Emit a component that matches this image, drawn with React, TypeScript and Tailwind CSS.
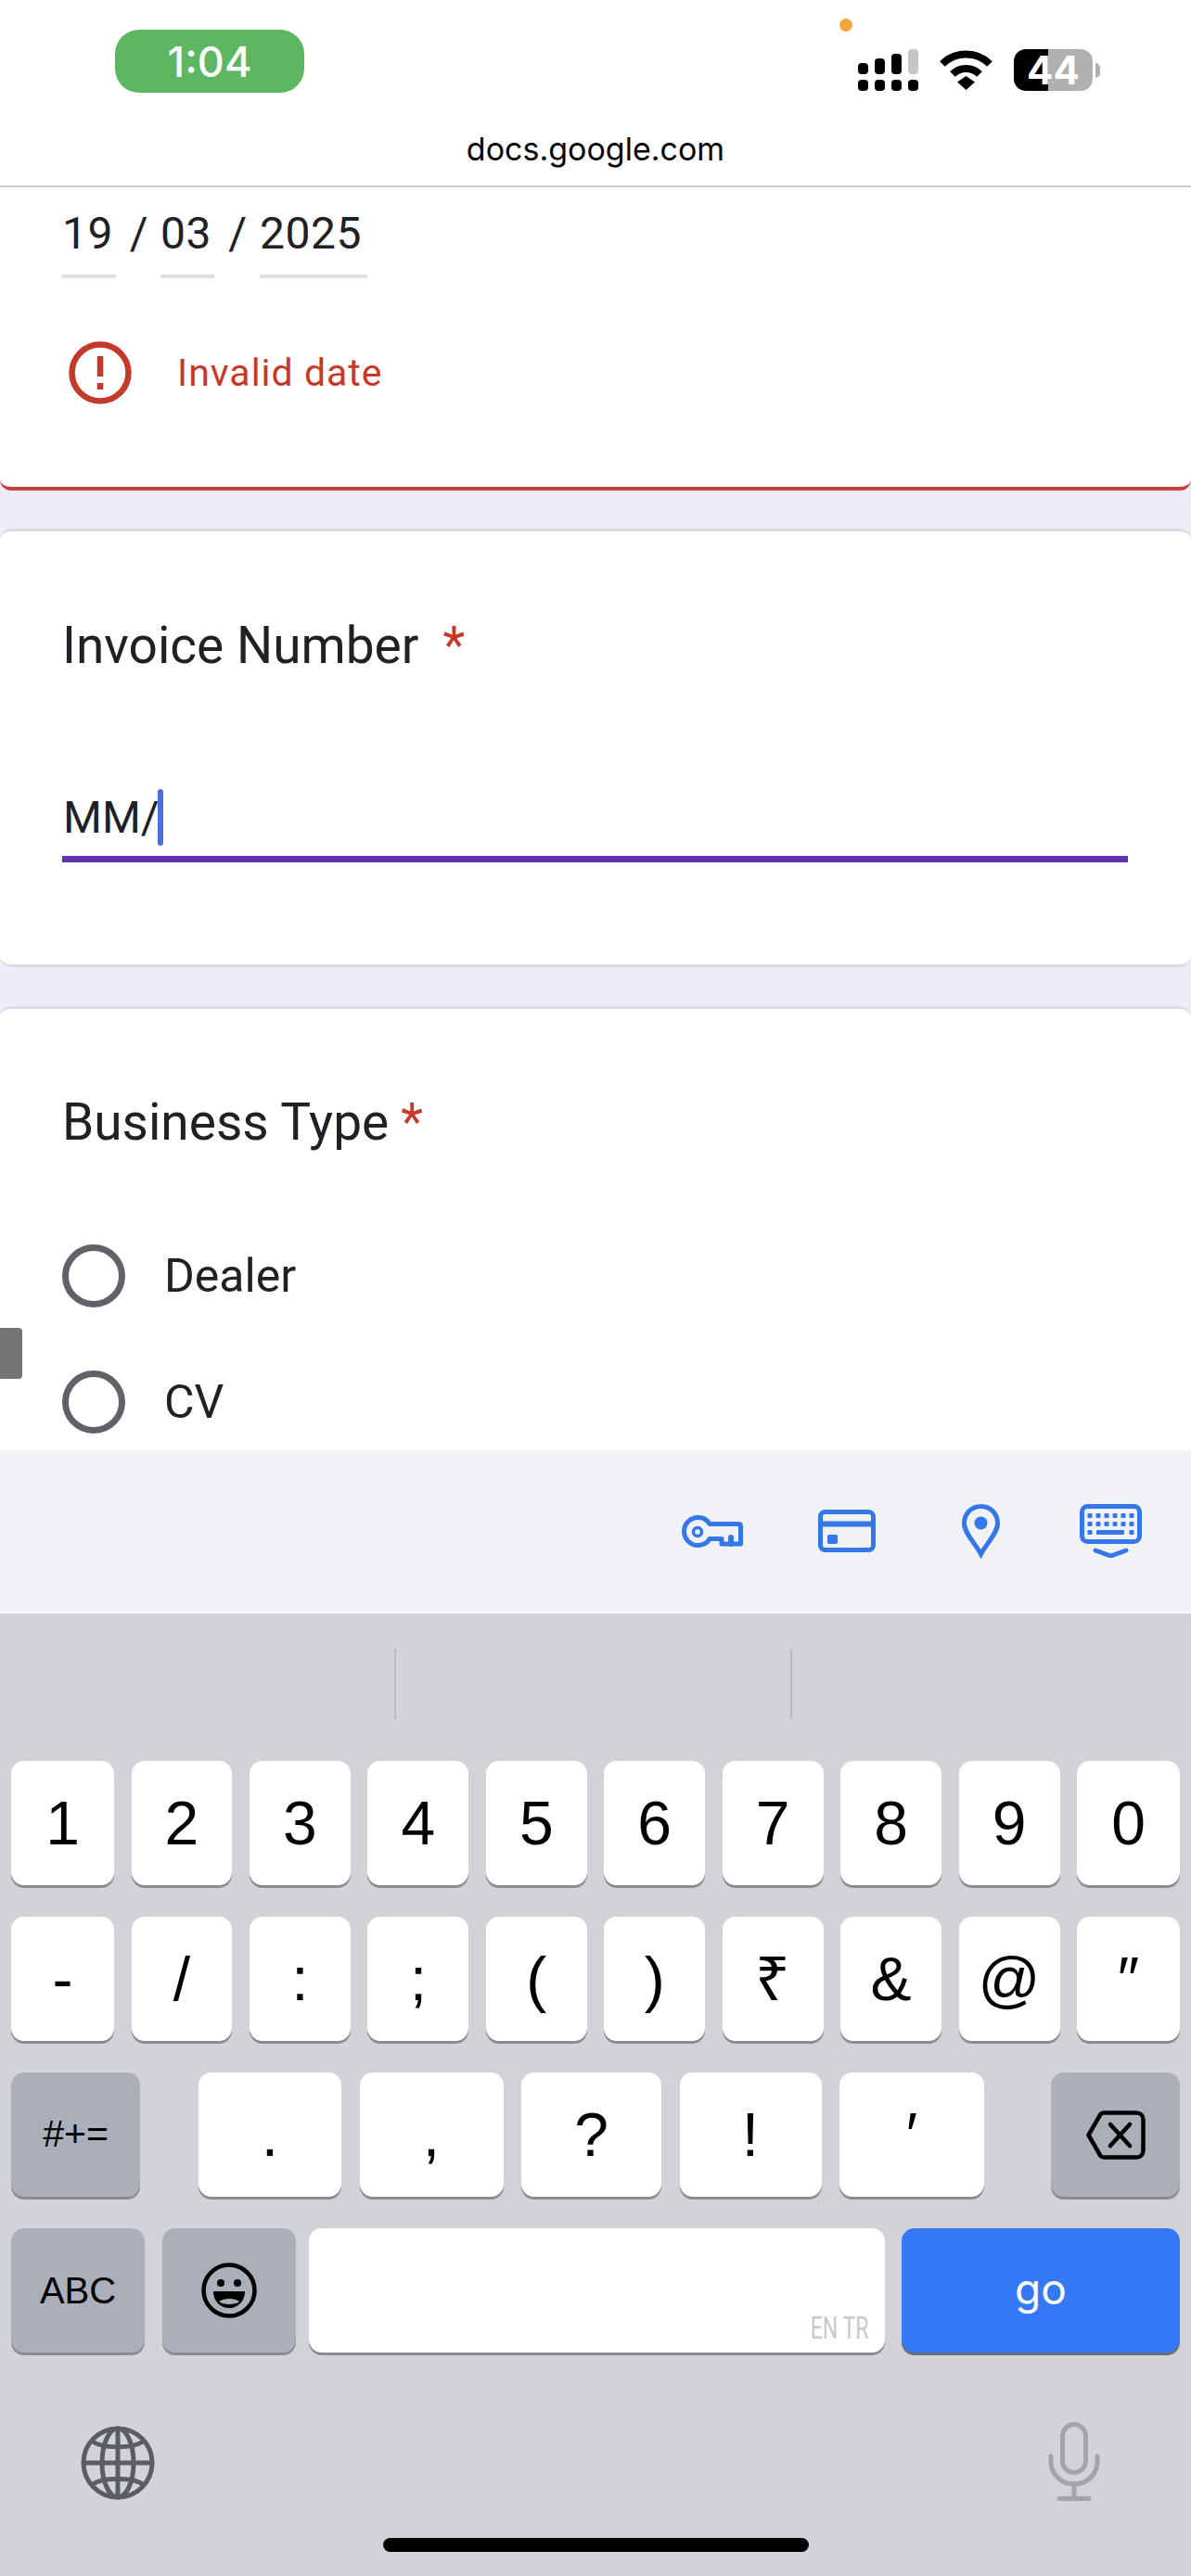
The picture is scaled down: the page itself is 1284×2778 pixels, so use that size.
const row1 = ['1', '2', '3', '4', '5', '6', '7', '8', '9', '0']
const row2 = ['-', '/', ':', ';', '(', ')', '₹', '&', '@', '″']
const row3 = [
  { label: '.', width: 'w-[154px]' },
  { label: ',', width: 'w-[155px]' },
  { label: '?', width: 'w-[151px]' },
  { label: '!', width: 'w-[153px]' },
  { label: '′', width: 'w-[156px]' },
]

function Key({ children, className = '' }: { children?: React.ReactNode; className?: string }) {
  return (
    <div className={`flex h-[134px] items-center justify-center rounded-[14px] bg-white text-[66px] text-black shadow-[0_3px_0_#8b8c91] ${className}`}>
      {children}
    </div>
  )
}

function GrayKey({ children, className = '' }: { children?: React.ReactNode; className?: string }) {
  return (
    <div className={`flex h-[134px] items-center justify-center rounded-[14px] bg-[#abafba] text-black shadow-[0_3px_0_#8b8c91] ${className}`}>
      {children}
    </div>
  )
}

function KeyRow({ keys }: { keys: string[] }) {
  return (
    <div className="flex gap-[18.5px]">
      {keys.map((k, i) => (
        <Key key={k} className={i === 0 || i === 9 ? 'w-[111px]' : 'flex-1'}>
          {k}
        </Key>
      ))}
    </div>
  )
}

function Signal() {
  return (
    <svg width="65" height="45" viewBox="0 0 65 45" fill="#000">
      <rect x="0" y="15" width="11" height="12" rx="4" />
      <rect x="18" y="10" width="11" height="17" rx="4" />
      <rect x="36" y="5" width="11" height="22" rx="4" />
      <rect x="54" y="0" width="11" height="27" rx="4" fill="#c6c6c6" />
      <rect x="0" y="33" width="11" height="12" rx="4" />
      <rect x="18" y="33" width="11" height="12" rx="4" />
      <rect x="36" y="33" width="11" height="12" rx="4" />
      <rect x="54" y="33" width="11" height="12" rx="4" />
    </svg>
  )
}

function Wifi() {
  return (
    <svg width="57" height="43" viewBox="0 0 57 43" fill="none" stroke="#000" strokeWidth="8">
      <path d="M3 15C17 1 40 1 54 15" />
      <path d="M14 26C22 18 35 18 43 26" />
      <path d="M19 34.500L28.500 28L38 34.500L28.500 43Z" fill="#000" stroke="none" />
    </svg>
  )
}

function KeyIcon() {
  return (
    <svg width="66" height="35" viewBox="0 0 66 35" fill="none" stroke="#3377ea" strokeWidth="5" strokeLinejoin="round">
      <path d="M30 9.500C27.500 5 23 2.500 17.500 2.500C9.500 2.500 2.500 9 2.500 17.500C2.500 26 9.500 32.500 17.500 32.500C23 32.500 27.500 30 30 25.500H43V31H63.500V12C63.500 10.500 62.500 9.500 61 9.500Z" />
      <circle cx="17" cy="18" r="4.500" strokeWidth="3.500" />
      <path d="M53 31V24" strokeWidth="6" strokeLinecap="round" />
    </svg>
  )
}

function CardIcon() {
  return (
    <svg width="62" height="46" viewBox="0 0 62 46" fill="none" stroke="#3377ea" strokeWidth="5">
      <rect x="2.500" y="2.500" width="57" height="41" rx="5" />
      <path d="M2 15.500H60" strokeWidth="6" />
      <rect x="10" y="27" width="11" height="10" rx="2" fill="#3377ea" stroke="none" />
    </svg>
  )
}

function PinIcon() {
  return (
    <svg width="41" height="59" viewBox="0 0 41 59" fill="none" stroke="#3377ea" strokeWidth="5">
      <path d="M20.500 2.500C10 2.500 2.500 10.500 2.500 21C2.500 31 14 42 20.500 54C27 42 38.500 31 38.500 21C38.500 10.500 31 2.500 20.500 2.500Z" />
      <circle cx="20.500" cy="20.500" r="7" fill="#3377ea" stroke="none" />
    </svg>
  )
}

function KeyboardIcon() {
  const cols = [11, 20, 29, 38, 47, 56]
  return (
    <svg width="67" height="58" viewBox="0 0 67 58" fill="#3377ea">
      <rect x="2.500" y="2.500" width="62" height="38" rx="6" fill="none" stroke="#3377ea" strokeWidth="5" />
      {cols.map((x) => (
        <rect key={`a${x}`} x={x - 2.500} y="10" width="5" height="5" rx="1" />
      ))}
      {cols.map((x) => (
        <rect key={`b${x}`} x={x - 2.500} y="19" width="5" height="5" rx="1" />
      ))}
      <rect x="8.500" y="28" width="5" height="5" rx="1" />
      <rect x="18" y="28" width="30" height="5" rx="1" />
      <rect x="53.500" y="28" width="5" height="5" rx="1" />
      <path d="M17 50L33.500 56L50 50" fill="none" stroke="#3377ea" strokeWidth="5" strokeLinecap="round" />
    </svg>
  )
}

function Backspace() {
  return (
    <svg width="64" height="53" viewBox="0 0 64 53" fill="none" stroke="#000" strokeWidth="4.500" strokeLinejoin="round" strokeLinecap="round">
      <path d="M19 2.500H54C58.500 2.500 61.500 5.500 61.500 10V43C61.500 47.500 58.500 50.500 54 50.500H19C17.500 50.500 16.500 50 15.500 49L2.500 26.500L15.500 4C16.500 3 17.500 2.500 19 2.500Z" />
      <path d="M26 15L47 38M47 15L26 38" />
    </svg>
  )
}

function Smiley() {
  return (
    <svg width="60" height="60" viewBox="0 0 60 60" fill="none" stroke="#000">
      <circle cx="30" cy="30" r="27.500" strokeWidth="4.500" />
      <circle cx="21" cy="22" r="4" fill="#000" stroke="none" />
      <circle cx="39" cy="22" r="4" fill="#000" stroke="none" />
      <path d="M13 31H47C47 42 39 49 30 49C21 49 13 42 13 31Z" fill="#000" stroke="none" />
      <path d="M19 42C25 38 35 38 41 42C37 46 23 46 19 42Z" fill="#abafba" stroke="none" />
    </svg>
  )
}

function Globe() {
  return (
    <svg width="80" height="80" viewBox="0 0 80 80" fill="none" stroke="#5b5d65" strokeWidth="5">
      <circle cx="40" cy="40" r="37" />
      <ellipse cx="40" cy="40" rx="17" ry="37" />
      <path d="M40 3V77M3 40H77" />
      <path d="M12 16C22 25 58 25 68 16M12 64C22 55 58 55 68 64" />
    </svg>
  )
}

function Mic() {
  return (
    <svg width="56" height="85" viewBox="0 0 56 85" fill="none" stroke="#a2a4aa" strokeWidth="5" strokeLinecap="round">
      <rect x="15.500" y="2.500" width="25" height="52" rx="12.500" />
      <path d="M3 37V43C3 56 14 67 28 67C42 67 53 56 53 43V37" />
      <path d="M28 67V81" />
      <path d="M12 82.500H44" strokeWidth="5" />
    </svg>
  )
}

function AlertIcon() {
  return (
    <svg width="68" height="68" viewBox="0 0 68 68" fill="none" stroke="#c5392b">
      <circle cx="34" cy="34" r="30.500" strokeWidth="6.500" />
      <path d="M34 16V38M34 45V52" strokeWidth="6.500" />
    </svg>
  )
}

function Radio({ label }: { label: string }) {
  return (
    <div className="flex items-center gap-[42px]">
      <div className="h-[68px] w-[68px] rounded-full border-[7px] border-[#5f6368]" />
      <span className="text-[50px] leading-[56px] text-[#202124]">{label}</span>
    </div>
  )
}

export default function App() {
  return (
    <div className="flex h-[2778px] w-[1284px] flex-col overflow-hidden bg-white font-['Roboto',sans-serif]">
      {/* Status bar and address */}
      <div className="relative h-[202px] shrink-0 border-b-2 border-[#cccccc] bg-white font-['Inter',sans-serif]">
        <div className="absolute left-[905px] top-[20px] h-[14px] w-[14px] rounded-full bg-[#f4a640]" />
        <div className="flex items-start justify-between pl-[124px] pr-[98px] pt-[32px]">
          <div className="flex h-[68px] w-[204px] items-center justify-center rounded-[26px] bg-[#5db761] pt-[2px] text-[45px] font-medium text-white">
            1:04
          </div>
          <div className="flex items-center pt-[21px]">
            <Signal />
            <div className="ml-[23px] mr-[23px]">
              <Wifi />
            </div>
            <div className="flex h-[45px] w-[85px] items-center justify-center rounded-[13px] bg-[linear-gradient(90deg,#000_44%,#b0b0b0_44%)] text-[42px] font-bold text-white">
              44
            </div>
            <div className="ml-[3px] h-[16px] w-[5px] rounded-r-full bg-[#b0b0b0]" />
          </div>
        </div>
        <div className="mt-[41px] text-center text-[34px] leading-[40px] text-black">docs.google.com</div>
      </div>

      {/* Form */}
      <div className="relative h-[1362px] shrink-0 overflow-hidden bg-[#f0ebf8]">
        <div className="absolute left-0 top-[1230px] z-10 h-[55px] w-[24px] rounded-r-[4px] bg-[#757575]" />

        <div className="rounded-b-[12px] border-b-4 border-[#c5403b] bg-white px-[67px] pb-[89px] pt-[22px] text-[#202124]">
          <div className="flex text-[48px] leading-[56px] tracking-[0.5px]">
            <div className="w-[58px] border-b-4 border-[#e0e0e0] pb-[16px]">19</div>
            <div className="w-[48px] pl-[2px] text-center">/</div>
            <div className="w-[58px] border-b-4 border-[#e0e0e0] pb-[16px]">03</div>
            <div className="w-[49px] pl-[2px] text-center">/</div>
            <div className="w-[116px] border-b-4 border-[#e0e0e0] pb-[16px]">2025</div>
          </div>
          <div className="ml-[7px] mt-[68px] flex items-center gap-[49px]">
            <AlertIcon />
            <span className="pt-[2px] text-[41px] tracking-[1px] text-[#c5392b]">Invalid date</span>
          </div>
        </div>

        <div className="mt-[41px] rounded-[12px] border-y-[3px] border-[#dadce0] bg-white pb-[110px] pl-[67px] pr-[68px] pt-[91px]">
          <div className="flex text-[55px] leading-[64px] text-[#202124]">
            Invoice Number
            <span className="ml-[26px] text-[#c5392b]">*</span>
          </div>
          <div className="mt-[126px] flex h-[76px] items-start border-b-[7px] border-[#5e35b1] text-[48px] leading-[56px] text-[#202124]">
            <span className="pl-px">MM/</span>
            <div className="-ml-[2px] -mt-[3px] h-[61px] w-[6px] rounded-full bg-[#4d6de0]" />
          </div>
        </div>

        <div className="mt-[42px] rounded-t-[12px] border-t-[3px] border-[#dadce0] bg-white pb-[40px] pl-[67px] pt-[90px]">
          <div className="flex text-[55px] leading-[64px] text-[#202124]">
            Business Type
            <span className="ml-[13px] text-[#c5392b]">*</span>
          </div>
          <div className="mt-[100px] flex flex-col gap-[68px]">
            <Radio label="Dealer" />
            <Radio label="CV" />
          </div>
        </div>
      </div>

      {/* Autofill toolbar */}
      <div className="flex h-[176px] shrink-0 items-center justify-end border-b-2 border-[#f7f8f9] bg-[#f0f2f5] pr-[53px]">
        <KeyIcon />
        <div className="ml-[81px]">
          <CardIcon />
        </div>
        <div className="ml-[93px]">
          <PinIcon />
        </div>
        <div className="ml-[86px]">
          <KeyboardIcon />
        </div>
      </div>

      {/* Keyboard */}
      <div className="flex flex-1 flex-col bg-[#d1d3d9] font-['Liberation_Sans',sans-serif]">
        <div className="flex h-[159px] shrink-0 pt-[38px]">
          <div className="h-[76px] w-[427px] border-r-2 border-[#b9bbc1]" />
          <div className="h-[76px] w-[427px] border-r-2 border-[#b9bbc1]" />
        </div>
        <div className="flex flex-col gap-[34px] px-[12px]">
          <KeyRow keys={row1} />
          <KeyRow keys={row2} />
          <div className="flex">
            <GrayKey className="w-[139px] text-[41px]">#+=</GrayKey>
            <div className="ml-[63px] flex gap-[19.5px]">
              {row3.map((k) => (
                <Key key={k.label} className={k.width}>
                  {k.label}
                </Key>
              ))}
            </div>
            <GrayKey className="ml-auto w-[139px]">
              <Backspace />
            </GrayKey>
          </div>
          <div className="flex">
            <GrayKey className="w-[144px] text-[40px]">ABC</GrayKey>
            <GrayKey className="ml-[19px] w-[144px]">
              <Smiley />
            </GrayKey>
            <Key className="ml-[14px] w-[621px] !items-end !justify-end pb-[10px] pr-[17px]">
              <span className="origin-right scale-x-[0.68] font-['Roboto',sans-serif] text-[34px] leading-[34px] text-[#c9c9cb]">EN TR</span>
            </Key>
            <div className="ml-[18px] flex h-[134px] w-[300px] items-center justify-center rounded-[14px] bg-[#3478f6] pb-[4px] font-['Inter',sans-serif] text-[46px] text-white shadow-[0_3px_0_#6d6f78]">
              go
            </div>
          </div>
        </div>
        <div className="mt-[72px] flex items-start justify-between pl-[87px] pr-[98px]">
          <div className="pt-[7px]">
            <Globe />
          </div>
          <div className="pt-[3px]">
            <Mic />
          </div>
        </div>
        <div className="mt-[40px] flex justify-center">
          <div className="h-[15px] w-[459px] rounded-full bg-black" />
        </div>
      </div>
    </div>
  )
}
